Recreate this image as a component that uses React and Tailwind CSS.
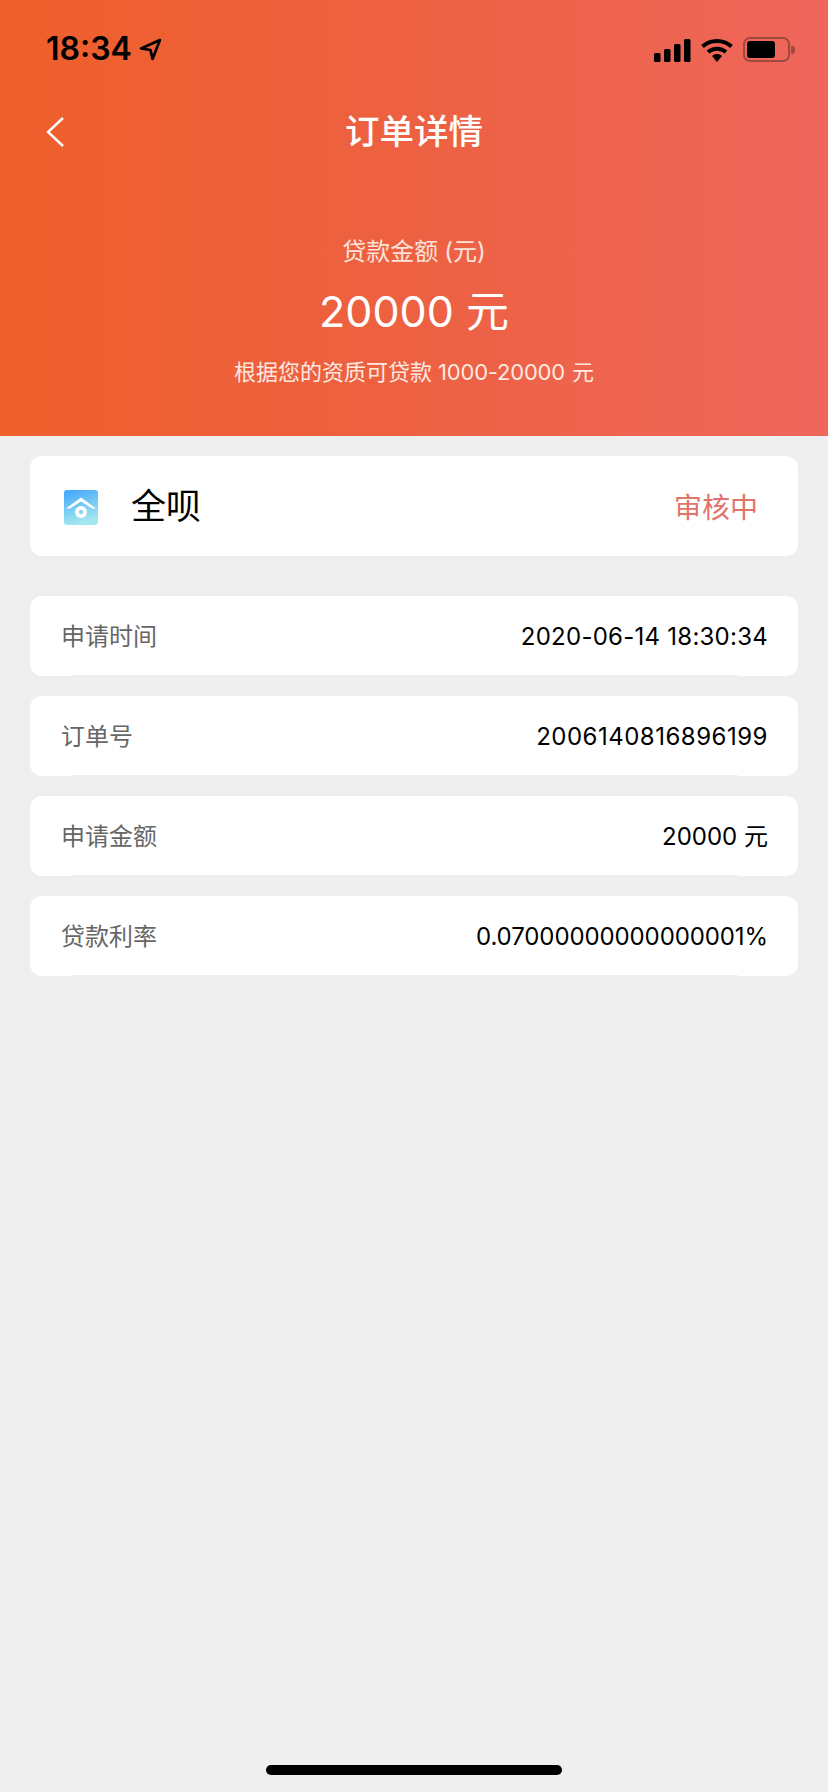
const rows = [
    { label: '申请时间', value: '2020-06-14 18:30:34', valueClass: 'tracking-[0.25px]' },
    { label: '订单号', value: '2006140816896199', valueClass: 'tracking-[0.5px]' },
    { label: '申请金额', value: '20000 元', valueClass: '' },
    { label: '贷款利率', value: '0.07000000000000001%', valueClass: 'tracking-[-0.1px]' },
];

const fontStack = "font-['Inter','Noto_Sans_CJK_SC',sans-serif]";

const StatusIcons = () => (
    <div className="flex items-center">
        {/* signal */}
        <svg width="37" height="23" viewBox="0 0 37 23" className="mt-[1px]">
            <rect x="0" y="14" width="6.5" height="9" rx="1.5" fill="#000" />
            <rect x="10" y="10" width="6.5" height="13" rx="1.5" fill="#000" />
            <rect x="20" y="5" width="6.5" height="18" rx="1.5" fill="#000" />
            <rect x="30" y="0" width="6.5" height="23" rx="1.5" fill="#000" />
        </svg>
        {/* wifi */}
        <svg width="32" height="24" viewBox="0 0 32 24" className="ml-[10px]">
            <path d="M1.5 8.5 C9.5 1 22.5 1 30.5 8.5" fill="none" stroke="#000" strokeWidth="4" />
            <path d="M7 14 C12 9.5 20 9.5 25 14" fill="none" stroke="#000" strokeWidth="4" />
            <path d="M11 18 C14 15.4 18 15.4 21 18 L16 24 Z" fill="#000" />
        </svg>
        {/* battery */}
        <div className="ml-[10px] flex items-center">
            <div className="w-[47px] h-[25px] rounded-[7px] border-2 border-[#9c4a3f] flex items-center pl-[2px]">
                <div className="w-[28px] h-[17px] rounded-[3px] bg-black" />
            </div>
            <div className="ml-[1px] w-[4px] h-[8px] rounded-r-[3px] bg-[#9c4a3f]" />
        </div>
    </div>
);

const LogoIcon = () => (
    <svg width="34" height="35" viewBox="0 0 34 35" className="shrink-0 mt-[2px]">
        <defs>
            <linearGradient id="logoBg" x1="0" y1="0" x2="0.3" y2="1">
                <stop offset="0" stopColor="#3fa5fb" />
                <stop offset="1" stopColor="#a3e8ef" />
            </linearGradient>
        </defs>
        <rect width="34" height="35" rx="3" fill="url(#logoBg)" />
        <path d="M2 18.5 L17 7.5 L32 18.5 L28 18.5 L17 11.5 L6 18.5 Z" fill="#fff" />
        <circle cx="17" cy="22" r="6" fill="#fff" />
        <circle cx="17" cy="22" r="2.2" fill="#8fd3f2" />
    </svg>
);

export default function App() {
    return (
        <div className={`${fontStack} w-[828px] h-[1792px] bg-[#efefef] flex flex-col`}>
            <div className="h-[436px] bg-linear-to-r/srgb from-[#ef5f2b] via-[#ed6142] to-[#ef675c] text-white flex flex-col items-center">
                <div className="w-full h-[100px] pt-[31px] pl-[46px] pr-[33px] flex items-start justify-between text-black">
                    <div className="flex items-center h-[36px]">
                        <span className="text-[32px] leading-[36px] font-semibold">18:34</span>
                        <svg width="23" height="23" viewBox="0 0 22 22" className="ml-[7px]">
                            <path d="M20 2 L2 10 L11 11.5 L13 20 Z" fill="none" stroke="#000" strokeWidth="2.6" strokeLinejoin="round" />
                        </svg>
                    </div>
                    <div className="pt-[6px]">
                        <StatusIcons />
                    </div>
                </div>
                <div className="w-full h-[64px] flex items-center justify-center relative">
                    <svg width="20" height="32" viewBox="0 0 20 32" className="absolute left-[45px] top-[16px]">
                        <path d="M18 2 L3 16 L18 30" fill="none" stroke="#fff" strokeWidth="2.4" />
                    </svg>
                    <span className="text-[34.5px] leading-[40px] font-medium">订单详情</span>
                </div>
                <div className="mt-[73px] text-[24px] leading-[30px] text-[#fbe3da]">
                    贷款金额<span className="ml-[6px]">(元)</span>
                </div>
                <div className="mt-[18px] text-[43px] leading-[52px]">20000 元</div>
                <div className="mt-[20px] text-[22px] leading-[30px] text-[#fde9e2] flex">
                    <span>根据您的资质可贷款</span>
                    <span className="ml-[6px] tracking-[-0.2px]">1000-20000</span>
                    <span className="ml-[7px]">元</span>
                </div>
            </div>

            <div className="mt-[20px] mx-[30px] h-[100px] bg-white rounded-[12px] pl-[34px] pr-[40px] flex items-center">
                <LogoIcon />
                <span className="ml-[33px] text-[35px] leading-[44px] text-black">全呗</span>
                <span className="ml-auto pt-[4px] text-[28px] leading-[36px] text-[#e2736b]">审核中</span>
            </div>

            <div className="mt-[40px] mx-[30px] flex flex-col gap-[20px]">
                {rows.map((row) => (
                    <div key={row.label} className="relative h-[80px] bg-white rounded-[12px] pl-[31px] pr-[30px] pt-[2px] flex items-center justify-between">
                        <span className="text-[24px] leading-[32px] text-[#666666]">{row.label}</span>
                        <span className={`text-[24px] leading-[32px] text-black ${row.valueClass}`}>{row.value}</span>
                        <div className="absolute bottom-0 left-[42px] right-[60px] h-px bg-[#efefef]" />
                    </div>
                ))}
            </div>

            <div className="mt-auto mb-[17px] mx-auto w-[296px] h-[10px] rounded-full bg-black" />
        </div>
    );
}
